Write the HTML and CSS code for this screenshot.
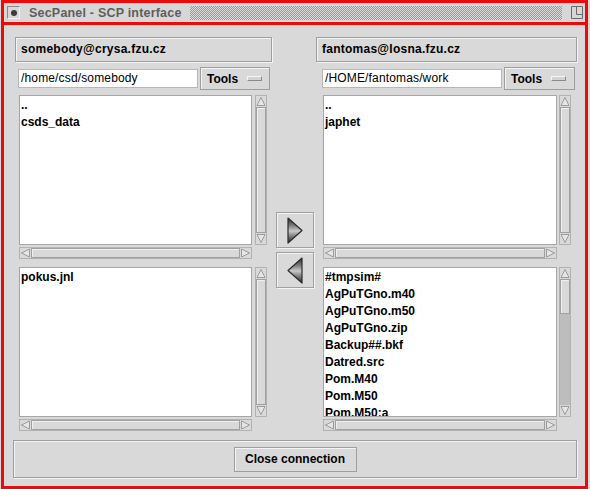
FILE: index.html
```html
<!DOCTYPE html>
<html>
<head>
<meta charset="utf-8">
<link rel="stylesheet" href="styles.css">
</head>
<body>
<svg class="defs" width="0" height="0" aria-hidden="true">
  <defs>
    <linearGradient id="metal" x1="0" y1="0" x2="0" y2="1">
      <stop offset="0" stop-color="#2e2e2e"/>
      <stop offset="0.3" stop-color="#7c7c7c"/>
      <stop offset="0.52" stop-color="#c9c9c9"/>
      <stop offset="0.75" stop-color="#777"/>
      <stop offset="1" stop-color="#262626"/>
    </linearGradient>
    <symbol id="a-up" viewBox="0 0 10 10"><path d="M5 1 L9 9 L1 9 Z" fill="#e6e6e6" stroke="#9c9c9c" stroke-width="1"/></symbol>
    <symbol id="a-down" viewBox="0 0 10 10"><path d="M1 1 L9 1 L5 9 Z" fill="#e6e6e6" stroke="#9c9c9c" stroke-width="1"/></symbol>
    <symbol id="a-left" viewBox="0 0 10 10"><path d="M1 5 L9 1 L9 9 Z" fill="#e6e6e6" stroke="#9c9c9c" stroke-width="1"/></symbol>
    <symbol id="a-right" viewBox="0 0 10 10"><path d="M1 1 L9 5 L1 9 Z" fill="#e6e6e6" stroke="#9c9c9c" stroke-width="1"/></symbol>
    <symbol id="t-right" viewBox="0 0 16 27"><path d="M1 1 L15 13.5 L1 26 Z" fill="url(#metal)" stroke="#2a2a2a" stroke-width="1.2" stroke-linejoin="round"/></symbol>
    <symbol id="t-left" viewBox="0 0 16 27"><path d="M15 1 L1 13.5 L15 26 Z" fill="url(#metal)" stroke="#2a2a2a" stroke-width="1.2" stroke-linejoin="round"/></symbol>
  </defs>
</svg>
<div class="window">
  <div class="titlebar">
    <span class="tb-close"><span class="tb-dot"></span></span>
    <span class="tb-title">SecPanel - SCP interface</span>
    <span class="tb-fill"></span>
    <svg class="tb-max" width="12" height="13" viewBox="0 0 12 13"><path d="M0.5 0.5 H11.5 V12.5 H0.5 Z M5.5 0.5 V8.5 H11.5" fill="none" stroke="#6a6a6a" stroke-width="1"/></svg>
  </div>
  <div class="content">
    <div class="panes">
      <div class="pane pane-left">
        <div class="host">somebody@crysa.fzu.cz</div>
        <div class="pathrow">
          <div class="path">/home/csd/somebody</div>
          <div class="tools">Tools<span class="ind"></span></div>
        </div>
        <div class="listgroup first">
          <div class="listrow">
            <div class="list"><div class="items"><div class="item">..</div><div class="item">csds_data</div></div></div>
            <div class="vscroll"><svg class="arr"><use href="#a-up"/></svg><div class="thumb"></div><svg class="arr"><use href="#a-down"/></svg></div>
          </div>
          <div class="hscroll"><svg class="harr"><use href="#a-left"/></svg><div class="hthumb"></div><svg class="harr"><use href="#a-right"/></svg></div>
        </div>
        <div class="listgroup second">
          <div class="listrow">
            <div class="list"><div class="items"><div class="item">pokus.jnl</div></div></div>
            <div class="vscroll"><svg class="arr"><use href="#a-up"/></svg><div class="thumb"></div><svg class="arr"><use href="#a-down"/></svg></div>
          </div>
          <div class="hscroll"><svg class="harr"><use href="#a-left"/></svg><div class="hthumb"></div><svg class="harr"><use href="#a-right"/></svg></div>
        </div>
      </div>
      <div class="mid">
        <div class="xbtn"><svg class="tri"><use href="#t-right"/></svg></div>
        <div class="xbtn"><svg class="tri"><use href="#t-left"/></svg></div>
      </div>
      <div class="pane pane-right">
        <div class="host">fantomas@losna.fzu.cz</div>
        <div class="pathrow">
          <div class="path">/HOME/fantomas/work</div>
          <div class="tools">Tools<span class="ind"></span></div>
        </div>
        <div class="listgroup first">
          <div class="listrow">
            <div class="list"><div class="items"><div class="item">..</div><div class="item">japhet</div></div></div>
            <div class="vscroll"><svg class="arr"><use href="#a-up"/></svg><div class="thumb"></div><svg class="arr"><use href="#a-down"/></svg></div>
          </div>
          <div class="hscroll"><svg class="harr"><use href="#a-left"/></svg><div class="hthumb"></div><svg class="harr"><use href="#a-right"/></svg></div>
        </div>
        <div class="listgroup second">
          <div class="listrow">
            <div class="list"><div class="items">
              <div class="item">#tmpsim#</div>
              <div class="item">AgPuTGno.m40</div>
              <div class="item">AgPuTGno.m50</div>
              <div class="item">AgPuTGno.zip</div>
              <div class="item">Backup##.bkf</div>
              <div class="item">Datred.src</div>
              <div class="item">Pom.M40</div>
              <div class="item">Pom.M50</div>
              <div class="item">Pom.M50:a</div>
            </div></div>
            <div class="vscroll"><svg class="arr"><use href="#a-up"/></svg><div class="thumb short"></div><div class="trough"></div><svg class="arr"><use href="#a-down"/></svg></div>
          </div>
          <div class="hscroll"><svg class="harr"><use href="#a-left"/></svg><div class="hthumb"></div><svg class="harr"><use href="#a-right"/></svg></div>
        </div>
      </div>
    </div>
    <div class="bottom">
      <div class="closebtn">Close connection</div>
    </div>
  </div>
</div>
</body>
</html>
```
FILE: styles.css
```css
* { box-sizing: border-box; }
html, body { margin: 0; padding: 0; }
body {
  width: 590px;
  height: 489px;
  overflow: hidden;
  background: #d9d9d9;
  font-family: "Liberation Sans", Arial, sans-serif;
  font-size: 12px;
  color: #000;
}
.defs { position: absolute; width: 0; height: 0; overflow: hidden; }

.window {
  margin-left: 1px;
  width: 587px;
  height: 489px;
  border: 3px solid #ee0a0a;
  background: #d9d9d9;
  display: flex;
  flex-direction: column;
}

/* title bar */
.titlebar {
  height: 22px;
  flex: none;
  border-bottom: 3px solid #ee0a0a;
  display: flex;
  align-items: center;
  padding: 0 2px 0 3px;
  background: #d7d7d7;
}
.tb-close {
  width: 13px;
  height: 13px;
  border: 1px solid;
  border-color: #8a8a8a #f2f2f2 #f2f2f2 #8a8a8a;
  display: flex;
  align-items: center;
  justify-content: center;
  flex: none;
}
.tb-dot { width: 6px; height: 6px; border-radius: 50%; background: #3c3c3c; }
.tb-title {
  margin-left: 9px;
  font-weight: bold;
  font-size: 12.5px;
  letter-spacing: 0.2px;
  color: #5e5e5e;
  white-space: pre;
}
.tb-fill {
  flex: 1;
  height: 14px;
  margin: 1px 9px 0 8px;
  background: repeating-conic-gradient(#9a9a9a 0 25%, #dadada 0 50%) 0 0 / 2px 2px;
}
.tb-max { flex: none; display: block; }

/* content */
.content {
  flex: 1;
  padding: 12px 8px 0 9px;
  display: flex;
  flex-direction: column;
}
.panes { display: flex; padding-left: 2px; height: 394px; }
.pane-left { width: 257px; }
.mid { width: 44px; padding: 175px 0 0 4px; display: flex; flex-direction: column; gap: 4px; }
.pane-right { width: 261px; }

.host {
  height: 25px;
  border: 1px solid #9e9e9e;
  box-shadow: inset 1px 1px 0 #f4f4f4, 1px 1px 0 #f4f4f4;
  padding-left: 5px;
  line-height: 23px;
  font-weight: bold;
  letter-spacing: 0.25px;
  white-space: nowrap;
}

.pathrow { margin-top: 5px; height: 23px; display: flex; align-items: center; }
.path {
  width: 180px;
  height: 19px;
  margin-left: 3px;
  background: #fff;
  border: 1px solid #b8b8b8;
  padding-left: 2px;
  line-height: 17px;
  letter-spacing: 0.15px;
  white-space: nowrap;
  overflow: hidden;
}
.pane-right .path { margin-left: 6px; }
.tools {
  margin-left: 2px;
  width: 70px;
  height: 23px;
  border: 1px solid #9e9e9e;
  box-shadow: inset 1px 1px 0 #f4f4f4;
  padding-left: 6px;
  display: flex;
  align-items: center;
  font-weight: bold;
}
.pane-right .tools { width: 71px; }
.ind {
  margin-left: 9px;
  width: 15px;
  height: 5px;
  border: 1px solid;
  border-color: #f6f6f6 #8a8a8a #8a8a8a #f6f6f6;
  background: #d3d3d3;
}

/* lists */
.listgroup.first { margin-top: 5px; }
.listgroup.second { margin-top: 8px; }
.listrow { display: flex; height: 150px; }
.list {
  margin-left: 4px;
  width: 233px;
  height: 150px;
  background: #fff;
  border: 1px solid #a6a6a6;
  overflow: hidden;
}
.pane-right .list { margin-left: 7px; width: 234px; }
.items { margin-top: 1px; }
.item { line-height: 17px; font-weight: bold; padding-left: 1px; white-space: nowrap; }

.vscroll {
  margin-left: 3px;
  width: 12px;
  height: 150px;
  border: 1px solid #b2b2b2;
  display: flex;
  flex-direction: column;
  background: #d9d9d9;
}
.pane-right .vscroll { margin-left: 2px; }
.arr { width: 10px; height: 11px; flex: none; display: block; }
.thumb {
  flex: 1;
  border: 1px solid #a0a0a0;
  box-shadow: inset 1px 1px 0 #f0f0f0;
  background: #d9d9d9;
}
.thumb.short { flex: none; height: 35px; }
.trough { flex: 1; background: #bdbdbd; }

.hscroll {
  margin: 2px 0 0 4px;
  width: 233px;
  height: 12px;
  border: 1px solid #b2b2b2;
  display: flex;
  background: #d9d9d9;
}
.pane-right .hscroll { margin-left: 7px; width: 234px; }
.harr { width: 11px; height: 10px; flex: none; display: block; }
.hthumb {
  flex: 1;
  border: 1px solid #a0a0a0;
  box-shadow: inset 1px 1px 0 #f0f0f0;
}

/* transfer buttons */
.xbtn {
  width: 38px;
  height: 36px;
  border: 1px solid #a0a0a0;
  box-shadow: inset 1px 1px 0 #f4f4f4, 1px 1px 0 #f4f4f4;
  display: flex;
  align-items: center;
  justify-content: center;
}
.tri { width: 16px; height: 27px; display: block; }

/* bottom */
.bottom {
  margin-top: 9px;
  height: 38px;
  border: 1px solid #9e9e9e;
  box-shadow: inset 1px 1px 0 #f4f4f4, 1px 1px 0 #f4f4f4;
  display: flex;
  align-items: center;
  justify-content: center;
}
.closebtn {
  width: 123px;
  height: 25px;
  border: 1px solid #9e9e9e;
  box-shadow: inset 1px 1px 0 #f4f4f4;
  display: flex;
  align-items: center;
  justify-content: center;
  font-weight: bold;
}
```
